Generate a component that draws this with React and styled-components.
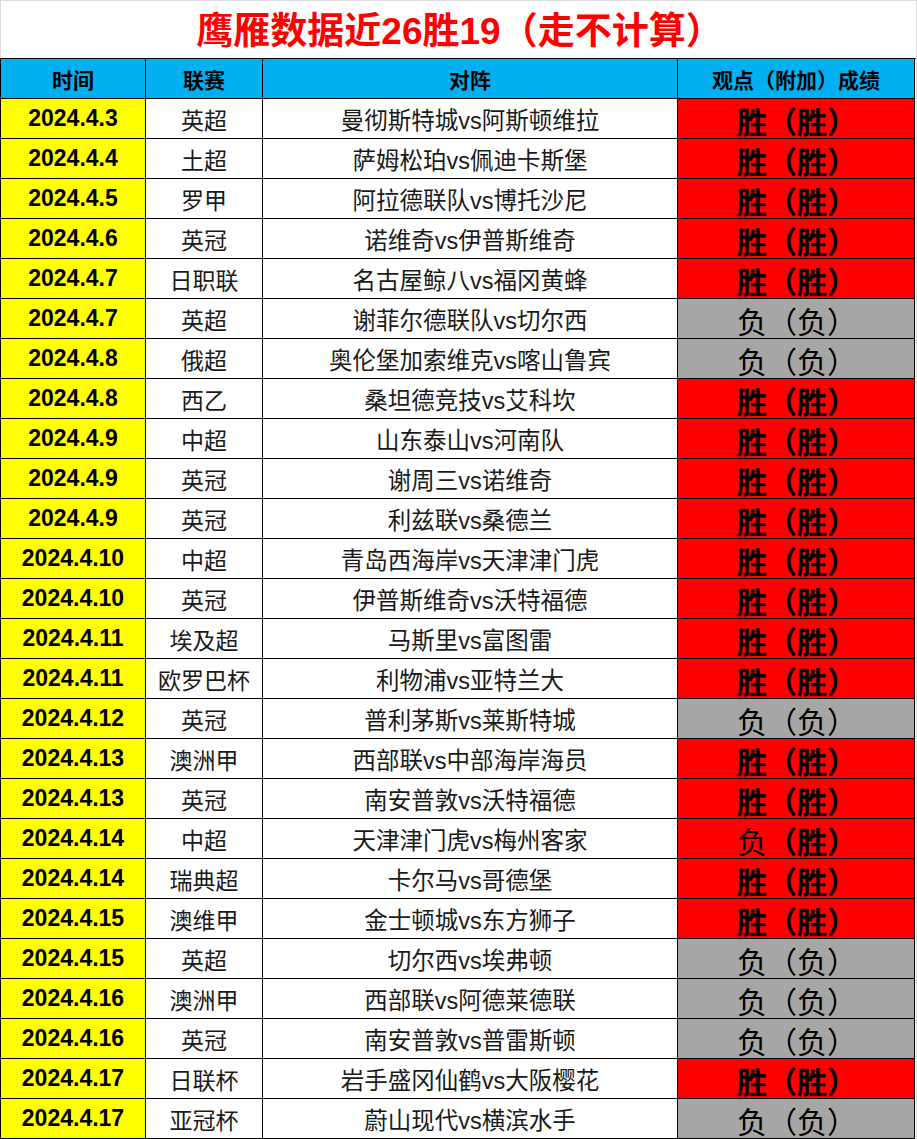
import React from 'react';
import styled, { createGlobalStyle } from 'styled-components';

const GlobalStyle = createGlobalStyle`
  html, body {
    margin: 0;
    padding: 0;
    background: #ffffff;
  }
  body {
    font-family: "Liberation Sans", "Noto Sans CJK SC", sans-serif;
  }
`;

const rows = [
  ['2024.4.3', '英超', '曼彻斯特城vs阿斯顿维拉', '胜', '胜'],
  ['2024.4.4', '土超', '萨姆松珀vs佩迪卡斯堡', '胜', '胜'],
  ['2024.4.5', '罗甲', '阿拉德联队vs博托沙尼', '胜', '胜'],
  ['2024.4.6', '英冠', '诺维奇vs伊普斯维奇', '胜', '胜'],
  ['2024.4.7', '日职联', '名古屋鲸八vs福冈黄蜂', '胜', '胜'],
  ['2024.4.7', '英超', '谢菲尔德联队vs切尔西', '负', '负'],
  ['2024.4.8', '俄超', '奥伦堡加索维克vs喀山鲁宾', '负', '负'],
  ['2024.4.8', '西乙', '桑坦德竞技vs艾科坎', '胜', '胜'],
  ['2024.4.9', '中超', '山东泰山vs河南队', '胜', '胜'],
  ['2024.4.9', '英冠', '谢周三vs诺维奇', '胜', '胜'],
  ['2024.4.9', '英冠', '利兹联vs桑德兰', '胜', '胜'],
  ['2024.4.10', '中超', '青岛西海岸vs天津津门虎', '胜', '胜'],
  ['2024.4.10', '英冠', '伊普斯维奇vs沃特福德', '胜', '胜'],
  ['2024.4.11', '埃及超', '马斯里vs富图雷', '胜', '胜'],
  ['2024.4.11', '欧罗巴杯', '利物浦vs亚特兰大', '胜', '胜'],
  ['2024.4.12', '英冠', '普利茅斯vs莱斯特城', '负', '负'],
  ['2024.4.13', '澳洲甲', '西部联vs中部海岸海员', '胜', '胜'],
  ['2024.4.13', '英冠', '南安普敦vs沃特福德', '胜', '胜'],
  ['2024.4.14', '中超', '天津津门虎vs梅州客家', '负', '胜'],
  ['2024.4.14', '瑞典超', '卡尔马vs哥德堡', '胜', '胜'],
  ['2024.4.15', '澳维甲', '金士顿城vs东方狮子', '胜', '胜'],
  ['2024.4.15', '英超', '切尔西vs埃弗顿', '负', '负'],
  ['2024.4.16', '澳洲甲', '西部联vs阿德莱德联', '负', '负'],
  ['2024.4.16', '英冠', '南安普敦vs普雷斯顿', '负', '负'],
  ['2024.4.17', '日联杯', '岩手盛冈仙鹤vs大阪樱花', '胜', '胜'],
  ['2024.4.17', '亚冠杯', '蔚山现代vs横滨水手', '负', '负'],
];

const Sheet = styled.div`
  width: 917px;
  box-sizing: border-box;
  border-top: 1px solid #dcdcdc;
  border-left: 1px solid #dcdcdc;
  border-right: 1px solid #dcdcdc;
  background: #ffffff;
`;

const Title = styled.div`
  height: 57px;
  display: flex;
  align-items: flex-end;
  justify-content: center;
  box-sizing: border-box;
  color: #ff0000;
  font-weight: bold;
  font-size: 37px;
  line-height: 52px;
  font-family: "Liberation Sans", "Noto Sans CJK SC", sans-serif;
  padding-left: 2px;
`;

const Grid = styled.div`
  display: grid;
  grid-template-columns: 145px 117px 415px 237px;
  grid-auto-rows: 40px;
  width: 915px;
  margin-left: -1px;
  border-top: 1px solid #000;
  border-left: 1px solid #000;
`;

const Cell = styled.div`
  box-sizing: border-box;
  border-right: 1px solid #000;
  border-bottom: 1px solid #000;
  display: flex;
  align-items: center;
  justify-content: center;
  background: #ffffff;
  color: #000;
  white-space: nowrap;
`;

const HeadCell = styled(Cell)`
  background: #00b0f0;
  font-size: 21px;
  font-weight: bold;
  font-family: "Noto Sans CJK SC", sans-serif;
`;

const DateCell = styled(Cell)`
  background: #ffff00;
  font-size: 23px;
  font-weight: bold;
  font-family: "Liberation Sans", sans-serif;
`;

const TextCell = styled(Cell)`
  font-size: ${p => (p.$wide ? '23.5px' : '23px')};
  font-family: "Liberation Sans", "Noto Sans CJK SC", sans-serif;
  color: #1a1a1a;
`;

const ResultCell = styled(Cell)`
  background: ${p => (p.$win ? '#ff0000' : '#a6a6a6')};
  font-size: 30px;
  font-family: "Noto Sans CJK SC", sans-serif;
  padding-left: 2px;
  padding-top: 2px;
`;

const Mark = styled.span`
  font-weight: ${p => (p.$win ? 'bold' : 'normal')};
`;

export default function App() {
  return (
    <>
      <GlobalStyle />
      <Sheet>
        <Title>鹰雁数据近26胜19（走不计算）</Title>
        <Grid>
          <HeadCell>时间</HeadCell>
          <HeadCell>联赛</HeadCell>
          <HeadCell>对阵</HeadCell>
          <HeadCell>观点（附加）成绩</HeadCell>
          {rows.map(([date, league, match, view, real], i) => (
            <React.Fragment key={i}>
              <DateCell>{date}</DateCell>
              <TextCell>{league}</TextCell>
              <TextCell $wide>{match}</TextCell>
              <ResultCell $win={real === '胜'}>
                <Mark $win={view === '胜'}>{view}</Mark>
                <Mark $win={real === '胜'}>（{real}）</Mark>
              </ResultCell>
            </React.Fragment>
          ))}
        </Grid>
      </Sheet>
    </>
  );
}
